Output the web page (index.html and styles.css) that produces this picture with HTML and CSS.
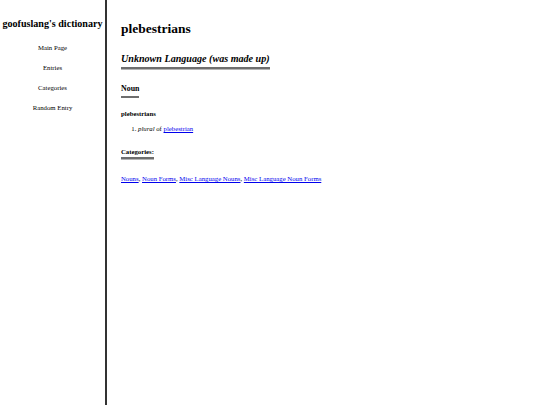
FILE: index.html
```html
<!DOCTYPE html>
<html lang="en">
<head>
<meta charset="utf-8">
<title>plebestrians - goofuslang's dictionary</title>
<link rel="stylesheet" href="styles.css">
</head>
<body>
<div class="layout">
  <aside class="sidebar">
    <h2 class="site-title">goofuslang's dictionary</h2>
    <nav class="nav">
      <a href="#">Main Page</a>
      <a href="#">Entries</a>
      <a href="#">Categories</a>
      <a href="#">Random Entry</a>
    </nav>
  </aside>
  <main class="content">
    <h1 class="page-title">plebestrians</h1>
    <h2 class="lang"><span class="rule">Unknown Language (was made up)</span></h2>
    <h3 class="pos"><span class="rule">Noun</span></h3>
    <p class="headword">plebestrians</p>
    <ol class="defs">
      <li><i>plural</i> of <a href="#">plebestrian</a></li>
    </ol>
    <h4 class="cats-title"><span class="rule">Categories:</span></h4>
    <p class="cats"><a href="#">Nouns</a>, <a href="#">Noun Forms</a>, <a href="#">Misc Language Nouns</a>, <a href="#">Misc Language Noun Forms</a></p>
  </main>
</div>
</body>
</html>
```
FILE: styles.css
```css
html, body {
  margin: 0;
  padding: 0;
  height: 100%;
  background: #fff;
  color: #000;
  font-family: "Liberation Serif", "Times New Roman", serif;
  font-size: 6.75px;
}

.layout {
  display: flex;
  min-height: 100vh;
}

.sidebar {
  width: 105px;
  flex: none;
  border-right: 2px solid #333;
  text-align: center;
}

.site-title {
  margin: 18px 0 0;
  font-size: 10.1px;
  line-height: 12px;
  font-weight: bold;
  white-space: nowrap;
}

.nav {
  display: flex;
  flex-direction: column;
  gap: 11px;
  margin-top: 13px;
}

.nav a {
  color: #000;
  text-decoration: none;
  line-height: 9px;
}

.content {
  flex: 1;
  padding: 0 14px;
}

.page-title {
  margin: 21px 0 0;
  font-size: 13.5px;
  line-height: 16px;
}

.rule {
  display: inline-block;
  border-bottom: 2px solid #6e6e6e;
  box-shadow: 0 1px 0 #b5b5b5;
}

.lang {
  margin: 16px 0 0;
  font-size: 10.1px;
  line-height: 12px;
  font-style: italic;
}

.lang .rule {
  padding-bottom: 2px;
}

.pos {
  margin: 15px 0 0;
  font-size: 7.9px;
  line-height: 10px;
}

.pos .rule {
  padding-bottom: 2px;
  box-shadow: none;
}

.headword {
  margin: 11px 0 0;
  font-weight: bold;
  line-height: 9px;
}

.defs {
  margin: 6px 0 0;
  padding-left: 17px;
  line-height: 9px;
}

.cats-title {
  margin: 14px 0 0;
  font-size: 6.75px;
  line-height: 9px;
}

.cats-title .rule {
  padding-bottom: 1px;
}

.cats {
  margin: 15px 0 0;
  line-height: 9px;
}

a {
  color: #0000ee;
}
```
